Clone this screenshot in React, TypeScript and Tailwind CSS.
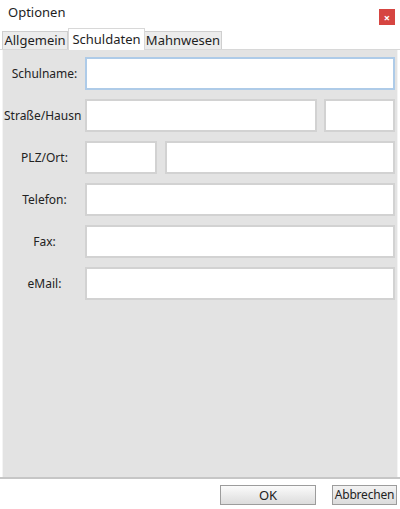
const font = { fontFamily: '"Noto Sans", "Open Sans", sans-serif' };

function Field({ className = "", focused = false }: { className?: string; focused?: boolean }) {
  return (
    <div
      className={
        "h-[33px] bg-white border-2 " +
        (focused ? "border-[#aecbe8]" : "border-[#d2d2d2]") +
        " " +
        className
      }
    />
  );
}

function Row({ label, children }: { label: React.ReactNode; children: React.ReactNode }) {
  return (
    <div className="flex items-center h-[33px]">
      <div className="w-[81px] shrink-0 text-center text-[12px] text-[#222] overflow-hidden whitespace-nowrap">
        {label}
      </div>
      <div className="flex flex-1 gap-[7px] pr-[2px]">{children}</div>
    </div>
  );
}

export default function App() {
  return (
    <div className="w-[400px] h-[509px] bg-white flex flex-col text-[#1e1e1e]" style={font}>
      <div className="h-[28px] flex items-start justify-between pl-[8px] pr-[5px]">
        <span className="text-[13px] mt-[3px]">Optionen</span>
        <div className="mt-[9px] w-[16px] h-[16px] bg-[#d64541] flex items-center justify-center text-white text-[11px] font-bold leading-none">
          ×
        </div>
      </div>

      <div className="flex items-end h-[22px] pl-[2px] border-b border-[#d8d8d8]">
        <div className="w-[66px] h-[18px] bg-[#ececec] border border-b-0 border-[#cfcfcf] text-[13px] leading-[17px] text-center">
          Allgemein
        </div>
        <div className="w-[77px] h-[22px] bg-white border border-b-0 border-[#d8d8d8] text-[13px] leading-[20px] text-center -mb-px">
          Schuldaten
        </div>
        <div className="w-[77px] h-[18px] bg-[#ececec] border border-b-0 border-l-0 border-[#cfcfcf] text-[13px] leading-[17px] text-center">
          Mahnwesen
        </div>
      </div>

      <div className="flex-1 mx-[2px] bg-[#e3e3e3] border-x border-[#f4f4f4] pt-[7px] pl-[1px] flex flex-col gap-[9px]">
        <Row label="Schulname:">
          <Field className="flex-1" focused />
        </Row>
        <Row label={<div className="w-[78px] overflow-hidden text-left">Straße/Hausnummer:</div>}>
          <Field className="flex-1" />
          <Field className="w-[71px]" />
        </Row>
        <Row label="PLZ/Ort:">
          <Field className="w-[72px]" />
          <Field className="flex-1 ml-[1px]" />
        </Row>
        <Row label="Telefon:">
          <Field className="flex-1" />
        </Row>
        <Row label="Fax:">
          <Field className="flex-1" />
        </Row>
        <Row label="eMail:">
          <Field className="flex-1" />
        </Row>
      </div>

      <div className="h-[32px] border-t-2 border-[#c6c6c6] flex justify-end items-start pt-[6px] pr-[3px] gap-[16px]">
        <button className="w-[96px] h-[20px] border border-[#9c9c9c] bg-gradient-to-b from-[#fbfbfb] to-[#dcdcdc] text-[13px] leading-[18px] text-[#222]">
          OK
        </button>
        <button className="w-[65px] h-[20px] border border-[#9c9c9c] bg-gradient-to-b from-[#f2f2f2] to-[#dcdcdc] text-[12px] tracking-[-0.2px] leading-[18px] text-[#222] whitespace-nowrap">
          Abbrechen
        </button>
      </div>
    </div>
  );
}
